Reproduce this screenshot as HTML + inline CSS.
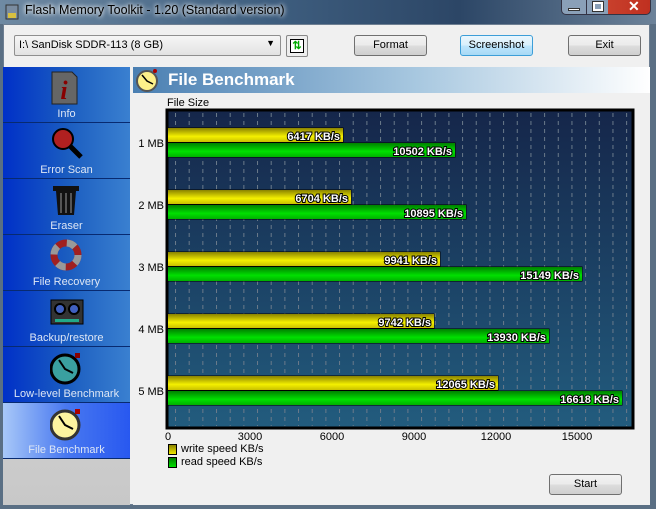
<!DOCTYPE html>
<html><head><style>
*{margin:0;padding:0;box-sizing:border-box}
body{width:656px;height:509px;overflow:hidden;font-family:"Liberation Sans",sans-serif;font-size:11px;background:#5a6f84;position:relative}
.title{position:absolute;left:0;top:0;width:656px;height:24px;background:linear-gradient(90deg,#6f8aa3,#3f5f80 40%,#2c4666 70%,#6c8299);}
.title span{position:absolute;left:25px;top:3px;font-size:12.5px;color:#000;text-shadow:0 0 6px #fff,0 0 4px #fff}
.win{position:absolute;left:3px;top:24px;width:647px;height:481px;background:#f0f0f0;border:1px solid #6e7f92}
.btn{position:absolute;height:21px;border:1px solid #707070;border-radius:3px;background:linear-gradient(#f2f2f2,#ebebeb 50%,#dddddd 51%,#cfcfcf);text-align:center;line-height:19px;font-size:11px}
.side{position:absolute;left:3px;top:67px;width:127px;height:438px;background:linear-gradient(#e8e8e8,#c8c8c8)}
.it{position:absolute;left:0;width:127px;height:56px;background:linear-gradient(90deg,#0030c8,#1a5cc0 50%,#3a80d0);border-bottom:1px solid #082a70;color:#dde6f5;text-align:center}
.it .l{position:absolute;left:0;right:0;bottom:2px;font-size:11px}
.it svg{position:absolute;left:47px;top:4px}
.sel{background:linear-gradient(90deg,#a8c8f8,#4878f0 50%,#2858f0)}
</style></head><body>
<div class="title"><svg style="position:absolute;left:5px;top:4px" width="14" height="16"><rect x="1" y="1" width="12" height="14" fill="#7a8ca0" stroke="#333"/><rect x="3" y="9" width="8" height="5" fill="#d8c040"/></svg><span>Flash Memory Toolkit - 1.20 (Standard version)</span>
<div style="position:absolute;left:561px;top:0;width:90px;height:15px;border:1px solid #334;border-top:0;border-radius:0 0 5px 5px;background:linear-gradient(90deg,#8aa0b8 0,#8aa0b8 52%,#c8402c 52%,#c03020)"></div>
<div style="position:absolute;left:586px;top:0;width:1px;height:15px;background:#334"></div>
<div style="position:absolute;left:568px;top:8px;width:12px;height:3px;background:#fff;border:1px solid #333"></div>
<div style="position:absolute;left:593px;top:2px;width:10px;height:9px;border:2px solid #fff;outline:1px solid #333"></div>
<div style="position:absolute;left:628px;top:-2px;color:#fff;font-weight:bold;font-size:14px">✕</div></div>
<div class="win"></div>
<div style="position:absolute;left:14px;top:35px;width:267px;height:21px;border:1px solid #8f8f8f;border-radius:2px;background:linear-gradient(#f6f6f6,#e2e2e2);padding:3px 4px;font-size:11px">I:\ SanDisk SDDR-113 (8 GB)<span style="position:absolute;right:5px;top:2px;font-size:9px">▼</span></div>
<div style="position:absolute;left:286px;top:35px;width:22px;height:22px;border:1px solid #888;border-radius:2px;background:#eee"><div style="margin:3px;width:14px;height:14px;border:1px solid #000;background:#fff;color:#0a0;font-size:11px;line-height:12px;text-align:center;font-weight:bold">⇅</div></div>
<div class="btn" style="left:354px;top:35px;width:73px">Format</div>
<div class="btn" style="left:460px;top:35px;width:73px;border-color:#3c9ed8;background:linear-gradient(#eaf6fd,#d9f0fc 50%,#bee6fd 51%,#a7d9f5)">Screenshot</div>
<div class="btn" style="left:568px;top:35px;width:73px">Exit</div>

<div class="side">
<div class="it" style="top:0"><svg width="28" height="34"><path d="M2 1h20l5 5v27H2z" fill="#666" stroke="#222"/><text x="14" y="28" font-family="Liberation Serif" font-style="italic" font-weight="bold" font-size="26" fill="#800" text-anchor="middle">i</text></svg><div class="l">Info</div></div>
<div class="it" style="top:56px"><svg width="34" height="34"><circle cx="13" cy="12" r="10" fill="#b02020" stroke="#000" stroke-width="2"/><path d="M20 19l11 11" stroke="#000" stroke-width="5"/></svg><div class="l">Error Scan</div></div>
<div class="it" style="top:112px"><svg width="34" height="34"><rect x="3" y="3" width="26" height="5" fill="#111"/><path d="M6 8h20l-2 24H8z" fill="#111"/><path d="M11 10v20M16 10v20M21 10v20" stroke="#555" stroke-width="2"/></svg><div class="l">Eraser</div></div>
<div class="it" style="top:168px"><svg width="34" height="34"><circle cx="16" cy="16" r="12" fill="none" stroke="#a02020" stroke-width="7"/><circle cx="16" cy="16" r="12" fill="none" stroke="#999" stroke-width="7" stroke-dasharray="9 10"/></svg><div class="l">File Recovery</div></div>
<div class="it" style="top:224px"><svg width="34" height="34"><rect x="1" y="5" width="32" height="24" fill="#333" stroke="#000"/><circle cx="10" cy="14" r="5" fill="#4060c0" stroke="#000" stroke-width="2"/><circle cx="24" cy="14" r="5" fill="#4060c0" stroke="#000" stroke-width="2"/><rect x="5" y="24" width="24" height="3" fill="#2a8"/></svg><div class="l">Backup/restore</div></div>
<div class="it" style="top:280px"><svg width="34" height="34"><circle cx="15" cy="18" r="14" fill="#3aa0a0" stroke="#000" stroke-width="3"/><path d="M9 9l6 9l8 4" stroke="#000" stroke-width="2" fill="none"/><rect x="25" y="2" width="5" height="5" fill="#800"/></svg><div class="l">Low-level Benchmark</div></div>
<div class="it sel" style="top:336px"><svg width="34" height="34"><circle cx="15" cy="18" r="14" fill="#fdf4a0" stroke="#333" stroke-width="3"/><path d="M9 9l6 9l8 4" stroke="#000" stroke-width="2" fill="none"/><rect x="25" y="2" width="5" height="5" fill="#a00"/></svg><div class="l">File Benchmark</div></div>
</div>

<div style="position:absolute;left:133px;top:67px;width:517px;height:438px;background:#f0f0f0"></div>
<div style="position:absolute;left:133px;top:67px;width:517px;height:26px;background:linear-gradient(90deg,#4a7fb2,#a8c8e0 55%,#fff)"></div>
<svg style="position:absolute;left:135px;top:68px" width="26" height="24"><circle cx="12" cy="13" r="10" fill="#fdf08a" stroke="#555" stroke-width="2"/><path d="M7 7l5 6l6 3" stroke="#000" stroke-width="1.5" fill="none"/><circle cx="20" cy="3" r="2" fill="#a00"/></svg>
<div style="position:absolute;left:168px;top:70px;color:#fff;font-size:17px;font-weight:bold">File Benchmark</div>
<div style="position:absolute;left:167px;top:97px;font-size:11px">File Size</div>

<svg style="position:absolute;left:133px;top:105px" width="517" height="340" font-family="Liberation Sans" font-size="11">
<defs>
<linearGradient id="bg" x1="0" y1="0" x2="0" y2="1"><stop offset="0" stop-color="#15264a"/><stop offset="1" stop-color="#225c7e"/></linearGradient>
<linearGradient id="y" x1="0" y1="0" x2="0" y2="1"><stop offset="0" stop-color="#8a8200"/><stop offset=".6" stop-color="#f4f000"/><stop offset="1" stop-color="#c8c000"/></linearGradient>
<linearGradient id="g" x1="0" y1="0" x2="0" y2="1"><stop offset="0" stop-color="#008000"/><stop offset=".6" stop-color="#00e000"/><stop offset="1" stop-color="#00b000"/></linearGradient>
<pattern id="gr" x="1" y="0" width="13.67" height="8" patternUnits="userSpaceOnUse"><line x1="0.5" y1="0" x2="0.5" y2="4" stroke="#6a7a8a" stroke-width="1"/></pattern>
<pattern id="tk" x="1" y="0" width="13.67" height="8" patternUnits="userSpaceOnUse"><line x1="0.5" y1="0" x2="0.5" y2="4" stroke="#000" stroke-width="1"/></pattern>
</defs>
<rect x="34" y="5" width="466" height="318" fill="url(#bg)" stroke="#000" stroke-width="3"/>
<rect x="36" y="7" width="462" height="314" fill="url(#gr)"/>
<g font-weight="bold" fill="#fff" text-anchor="end" stroke="#000" stroke-width="2" paint-order="stroke">
<rect x="35" y="23" width="175" height="14" fill="url(#y)" stroke="#000" stroke-width="1"/><text x="207" y="35">6417 KB/s</text>
<rect x="35" y="38" width="287" height="14" fill="url(#g)" stroke="#000" stroke-width="1"/><text x="319" y="50">10502 KB/s</text>
<rect x="35" y="85" width="183" height="14" fill="url(#y)" stroke="#000" stroke-width="1"/><text x="215" y="97">6704 KB/s</text>
<rect x="35" y="100" width="298" height="14" fill="url(#g)" stroke="#000" stroke-width="1"/><text x="330" y="112">10895 KB/s</text>
<rect x="35" y="147" width="272" height="14" fill="url(#y)" stroke="#000" stroke-width="1"/><text x="304" y="159">9941 KB/s</text>
<rect x="35" y="162" width="414" height="14" fill="url(#g)" stroke="#000" stroke-width="1"/><text x="446" y="174">15149 KB/s</text>
<rect x="35" y="209" width="266" height="14" fill="url(#y)" stroke="#000" stroke-width="1"/><text x="298" y="221">9742 KB/s</text>
<rect x="35" y="224" width="381" height="14" fill="url(#g)" stroke="#000" stroke-width="1"/><text x="413" y="236">13930 KB/s</text>
<rect x="35" y="271" width="330" height="14" fill="url(#y)" stroke="#000" stroke-width="1"/><text x="362" y="283">12065 KB/s</text>
<rect x="35" y="286" width="454" height="14" fill="url(#g)" stroke="#000" stroke-width="1"/><text x="486" y="298">16618 KB/s</text>
</g>
<g text-anchor="end" fill="#000"><text x="31" y="42">1 MB</text><text x="31" y="104">2 MB</text><text x="31" y="166">3 MB</text><text x="31" y="228">4 MB</text><text x="31" y="290">5 MB</text></g>
<rect x="35" y="324" width="465" height="4" fill="url(#tk)"/>
<g text-anchor="middle" fill="#000"><text x="35" y="335">0</text><text x="117" y="335">3000</text><text x="199" y="335">6000</text><text x="281" y="335">9000</text><text x="363" y="335">12000</text><text x="444" y="335">15000</text></g>
</svg>
<div style="position:absolute;left:168px;top:444px;width:9px;height:11px;background:linear-gradient(#8a8200,#f0e800);border:1px solid #000"></div>
<div style="position:absolute;left:181px;top:443px;font-size:11px">write speed KB/s</div>
<div style="position:absolute;left:168px;top:457px;width:9px;height:11px;background:linear-gradient(#008000,#00e000);border:1px solid #000"></div>
<div style="position:absolute;left:181px;top:456px;font-size:11px">read speed KB/s</div>
<div class="btn" style="left:549px;top:474px;width:73px">Start</div>
</body></html>
